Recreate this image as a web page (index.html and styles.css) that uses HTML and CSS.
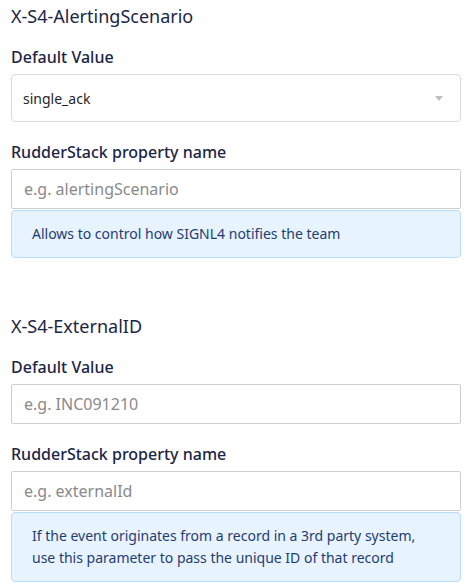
FILE: index.html
```html
<!DOCTYPE html>
<html>
<head>
<meta charset="utf-8">
<link rel="stylesheet" href="styles.css">
</head>
<body>
<div class="page">
  <section class="group">
    <h3 class="group-title">X-S4-AlertingScenario</h3>
    <div class="field">
      <label class="label">Default Value</label>
      <div class="select">
        <span class="select-value">single_ack</span>
        <svg class="select-arrow" width="8" height="5" viewBox="0 0 8 5"><path d="M0 0H8L4 5Z" fill="#bfbfbf"/></svg>
      </div>
    </div>
    <div class="field">
      <label class="label">RudderStack property name</label>
      <input class="input" type="text" placeholder="e.g. alertingScenario">
      <div class="info">Allows to control how SIGNL4 notifies the team</div>
    </div>
  </section>
  <section class="group group-second">
    <h3 class="group-title">X-S4-ExternalID</h3>
    <div class="field">
      <label class="label">Default Value</label>
      <input class="input" type="text" placeholder="e.g. INC091210">
    </div>
    <div class="field">
      <label class="label">RudderStack property name</label>
      <input class="input" type="text" placeholder="e.g. externalId">
      <div class="info">If the event originates from a record in a 3rd party system, use this parameter to pass the unique ID of that record</div>
    </div>
  </section>
</div>
</body>
</html>
```

FILE: styles.css
```css
html, body {
  margin: 0;
  padding: 0;
  background: #ffffff;
}
body {
  font-family: "Noto Sans", "Open Sans", sans-serif;
  color: #1c2546;
}
.page {
  padding: 4px 8px 0 11px;
  width: 450px;
}
.group-second {
  margin-top: 56px;
}
.group-title {
  margin: 0;
  font-size: 18px;
  line-height: 24px;
  font-weight: 400;
  color: #1c2546;
}
.field {
  display: flex;
  flex-direction: column;
  margin-top: 18px;
}
.group-title + .field {
  margin-top: 17px;
}
.label {
  font-size: 16px;
  line-height: 24px;
  font-weight: 500;
  color: #1c2546;
  margin-bottom: 5px;
}
.select {
  box-sizing: border-box;
  height: 48px;
  border: 1px solid #d9d9d9;
  border-radius: 4px;
  display: flex;
  align-items: center;
  justify-content: space-between;
  padding: 0 17px 0 11px;
}
.select-value {
  font-size: 14px;
  color: #1f1f1f;
}
.select-arrow {
  display: block;
  margin-top: 1px;
}
.input {
  box-sizing: border-box;
  height: 40px;
  width: 100%;
  margin: 0;
  border: 1px solid #cfcfcf;
  border-radius: 2px;
  padding: 0 12px;
  font-family: "Noto Sans", "Open Sans", sans-serif;
  font-size: 16px;
  color: #1f1f1f;
  outline: none;
}
.input::placeholder {
  color: #8a8a8a;
}
.info {
  margin-top: 1px;
  border: 1px solid #b9dcfb;
  background: #e7f3fe;
  border-radius: 4px;
  padding: 12px 20px;
  font-size: 14px;
  line-height: 22px;
  color: #1f3d73;
}
```
